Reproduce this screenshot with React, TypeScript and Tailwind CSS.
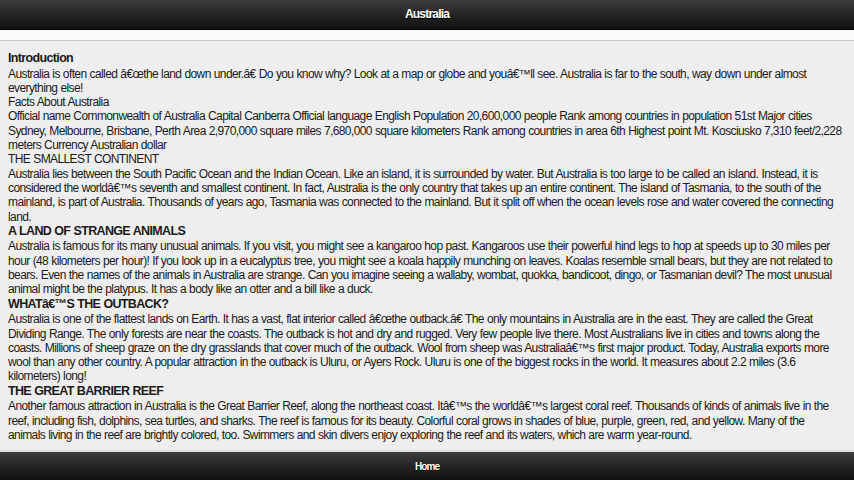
import React from "react";

const font = { fontFamily: '"Liberation Sans", Arial, sans-serif' };

// line breaks follow the reference page
const intro = [
  "Australia is often called â€œthe land down under.â€ Do you know why? Look at a map or globe and youâ€™ll see. Australia is far to the south, way down under almost",
  "everything else!",
];
const facts = [
  "Official name Commonwealth of Australia Capital Canberra Official language English Population 20,600,000 people Rank among countries in population 51st Major cities",
  "Sydney, Melbourne, Brisbane, Perth Area 2,970,000 square miles 7,680,000 square kilometers Rank among countries in area 6th Highest point Mt. Kosciusko 7,310 feet/2,228",
  "meters Currency Australian dollar",
];
const smallest = [
  "Australia lies between the South Pacific Ocean and the Indian Ocean. Like an island, it is surrounded by water. But Australia is too large to be called an island. Instead, it is",
  "considered the worldâ€™s seventh and smallest continent. In fact, Australia is the only country that takes up an entire continent. The island of Tasmania, to the south of the",
  "mainland, is part of Australia. Thousands of years ago, Tasmania was connected to the mainland. But it split off when the ocean levels rose and water covered the connecting",
  "land.",
];
const animals = [
  "Australia is famous for its many unusual animals. If you visit, you might see a kangaroo hop past. Kangaroos use their powerful hind legs to hop at speeds up to 30 miles per",
  "hour (48 kilometers per hour)! If you look up in a eucalyptus tree, you might see a koala happily munching on leaves. Koalas resemble small bears, but they are not related to",
  "bears. Even the names of the animals in Australia are strange. Can you imagine seeing a wallaby, wombat, quokka, bandicoot, dingo, or Tasmanian devil? The most unusual",
  "animal might be the platypus. It has a body like an otter and a bill like a duck.",
];
const outback = [
  "Australia is one of the flattest lands on Earth. It has a vast, flat interior called â€œthe outback.â€ The only mountains in Australia are in the east. They are called the Great",
  "Dividing Range. The only forests are near the coasts. The outback is hot and dry and rugged. Very few people live there. Most Australians live in cities and towns along the",
  "coasts. Millions of sheep graze on the dry grasslands that cover much of the outback. Wool from sheep was Australiaâ€™s first major product. Today, Australia exports more",
  "wool than any other country. A popular attraction in the outback is Uluru, or Ayers Rock. Uluru is one of the biggest rocks in the world. It measures about 2.2 miles (3.6",
  "kilometers) long!",
];
const reef = [
  "Another famous attraction in Australia is the Great Barrier Reef, along the northeast coast. Itâ€™s the worldâ€™s largest coral reef. Thousands of kinds of animals live in the",
  "reef, including fish, dolphins, sea turtles, and sharks. The reef is famous for its beauty. Colorful coral grows in shades of blue, purple, green, red, and yellow. Many of the",
  "animals living in the reef are brightly colored, too. Swimmers and skin divers enjoy exploring the reef and its waters, which are warm year-round.",
];

function Para({ lines }: { lines: string[] }) {
  return (
    <p>
      {lines.map((l, i) => (
        <span key={i} className="block whitespace-nowrap">
          {l}
        </span>
      ))}
    </p>
  );
}

function Heading({ children }: { children: React.ReactNode }) {
  return <h3 className="text-[12.5px] font-bold leading-[15.6px] tracking-[-0.65px] whitespace-nowrap">{children}</h3>;
}

function App() {
  return (
    <div className="h-[480px] w-[854px] flex flex-col bg-[#eeeeee] overflow-hidden" style={font}>
      {/* header bar */}
      <div className="h-[30px] shrink-0 flex items-center justify-center bg-gradient-to-b from-[#3c3c3c] to-[#111111] border-b border-black">
        <h1 className="text-[12px] font-bold text-white tracking-[-0.8px] [text-shadow:0_1px_0_#000] -mt-[2px]">Australia</h1>
      </div>
      <div className="h-[11px] shrink-0 bg-[#f9f9f9] border-b border-[#cccccc]" />

      {/* content */}
      <div className="flex-1 px-2 pt-[10px] text-[12px] leading-[14.3px] text-[#1a1a1a] tracking-[-0.6px] [word-spacing:0.3px]">
        <Heading>Introduction</Heading>
        <Para lines={intro} />
        <p>Facts About Australia</p>
        <Para lines={facts} />
        <p>THE SMALLEST CONTINENT</p>
        <Para lines={smallest} />
        <Heading>A LAND OF STRANGE ANIMALS</Heading>
        <Para lines={animals} />
        <Heading>WHATâ€™S THE OUTBACK?</Heading>
        <Para lines={outback} />
        <Heading>THE GREAT BARRIER REEF</Heading>
        <Para lines={reef} />
      </div>

      {/* footer bar */}
      <div className="h-[30px] shrink-0 border-t-2 border-t-[#dddddd] flex justify-center pt-[9px] bg-gradient-to-b from-[#3c3c3c] to-[#111111]">
        <a className="text-[10px] leading-[12px] font-bold text-white tracking-[-0.9px] [text-shadow:0_1px_0_#000]">Home</a>
      </div>
    </div>
  );
}

export default App;
